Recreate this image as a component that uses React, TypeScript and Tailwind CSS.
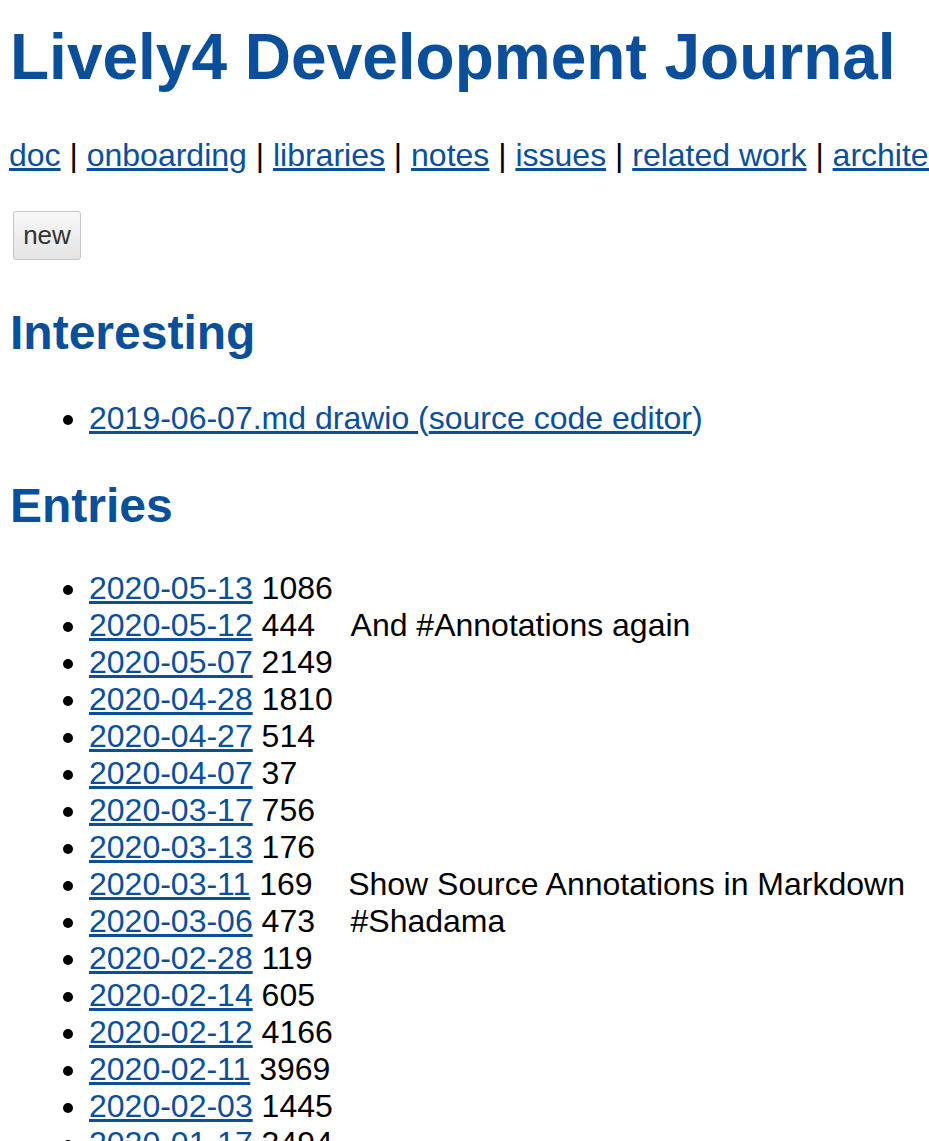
import React from "react";

const navLinks = ["doc", "onboarding", "libraries", "notes", "issues", "related work", "architecture"];

const entries: { date: string; size: string; title?: string }[] = [
  { date: "2020-05-13", size: "1086" },
  { date: "2020-05-12", size: "444", title: "And #Annotations again" },
  { date: "2020-05-07", size: "2149" },
  { date: "2020-04-28", size: "1810" },
  { date: "2020-04-27", size: "514" },
  { date: "2020-04-07", size: "37" },
  { date: "2020-03-17", size: "756" },
  { date: "2020-03-13", size: "176" },
  { date: "2020-03-11", size: "169", title: "Show Source Annotations in Markdown" },
  { date: "2020-03-06", size: "473", title: "#Shadama" },
  { date: "2020-02-28", size: "119" },
  { date: "2020-02-14", size: "605" },
  { date: "2020-02-12", size: "4166" },
  { date: "2020-02-11", size: "3969" },
  { date: "2020-02-03", size: "1445" },
  { date: "2020-01-17", size: "3494" }
];

export default function App() {
  return (
    <div className="w-full h-[1141px] overflow-hidden bg-white text-black pl-[9px] font-['Liberation_Sans',Arial,sans-serif]">
      {/* Title */}
      <h1 className="mt-[20px] ml-[1px] text-[64px] leading-[74px] font-bold text-[#0b4f9b] whitespace-nowrap">
        Lively4 Development Journal
      </h1>

      {/* Nav */}
      <p className="mt-[43px] text-[32px] leading-[37px] whitespace-nowrap">
        {navLinks.map((l, i) => (
          <React.Fragment key={l}>
            {i > 0 && " | "}
            <a href="#" className="text-[#0b4f9b] underline">{l}</a>
          </React.Fragment>
        ))}
      </p>

      <button className="mt-[37px] ml-[4px] block w-[68px] h-[49px] rounded-[3px] border border-[#c6c6c6] bg-gradient-to-b from-[#f8f8f8] to-[#e4e4e4] text-[26px] text-[#333] leading-none pb-[2px]">
        new
      </button>

      {/* Interesting */}
      <h2 className="mt-[45px] ml-[1px] text-[48px] leading-[55px] font-bold text-[#0b4f9b]">Interesting</h2>
      <ul className="mt-[40px] list-disc pl-[80px] text-[32px] leading-[37px]">
        <li>
          <a href="#" className="text-[#0b4f9b] underline">2019-06-07.md drawio </a>
          <span className="text-[#0b4f9b]">(</span>
          <a href="#" className="text-[#0b4f9b] underline">source code editor</a>
          <span className="text-[#0b4f9b]">)</span>
        </li>
      </ul>

      {/* Entries */}
      <h2 className="mt-[41px] ml-[1px] text-[48px] leading-[55px] font-bold text-[#0b4f9b]">Entries</h2>
      <ul className="mt-[37px] list-disc pl-[80px] text-[32px] leading-[37px]">
        {entries.map((e) => (
          <li key={e.date} className="whitespace-nowrap">
            <a href="#" className="text-[#0b4f9b] underline">{e.date}</a>
            {" " + e.size}
            {e.title && <span>{"\u00a0\u00a0\u00a0\u00a0" + e.title}</span>}
          </li>
        ))}
      </ul>
    </div>
  );
}
